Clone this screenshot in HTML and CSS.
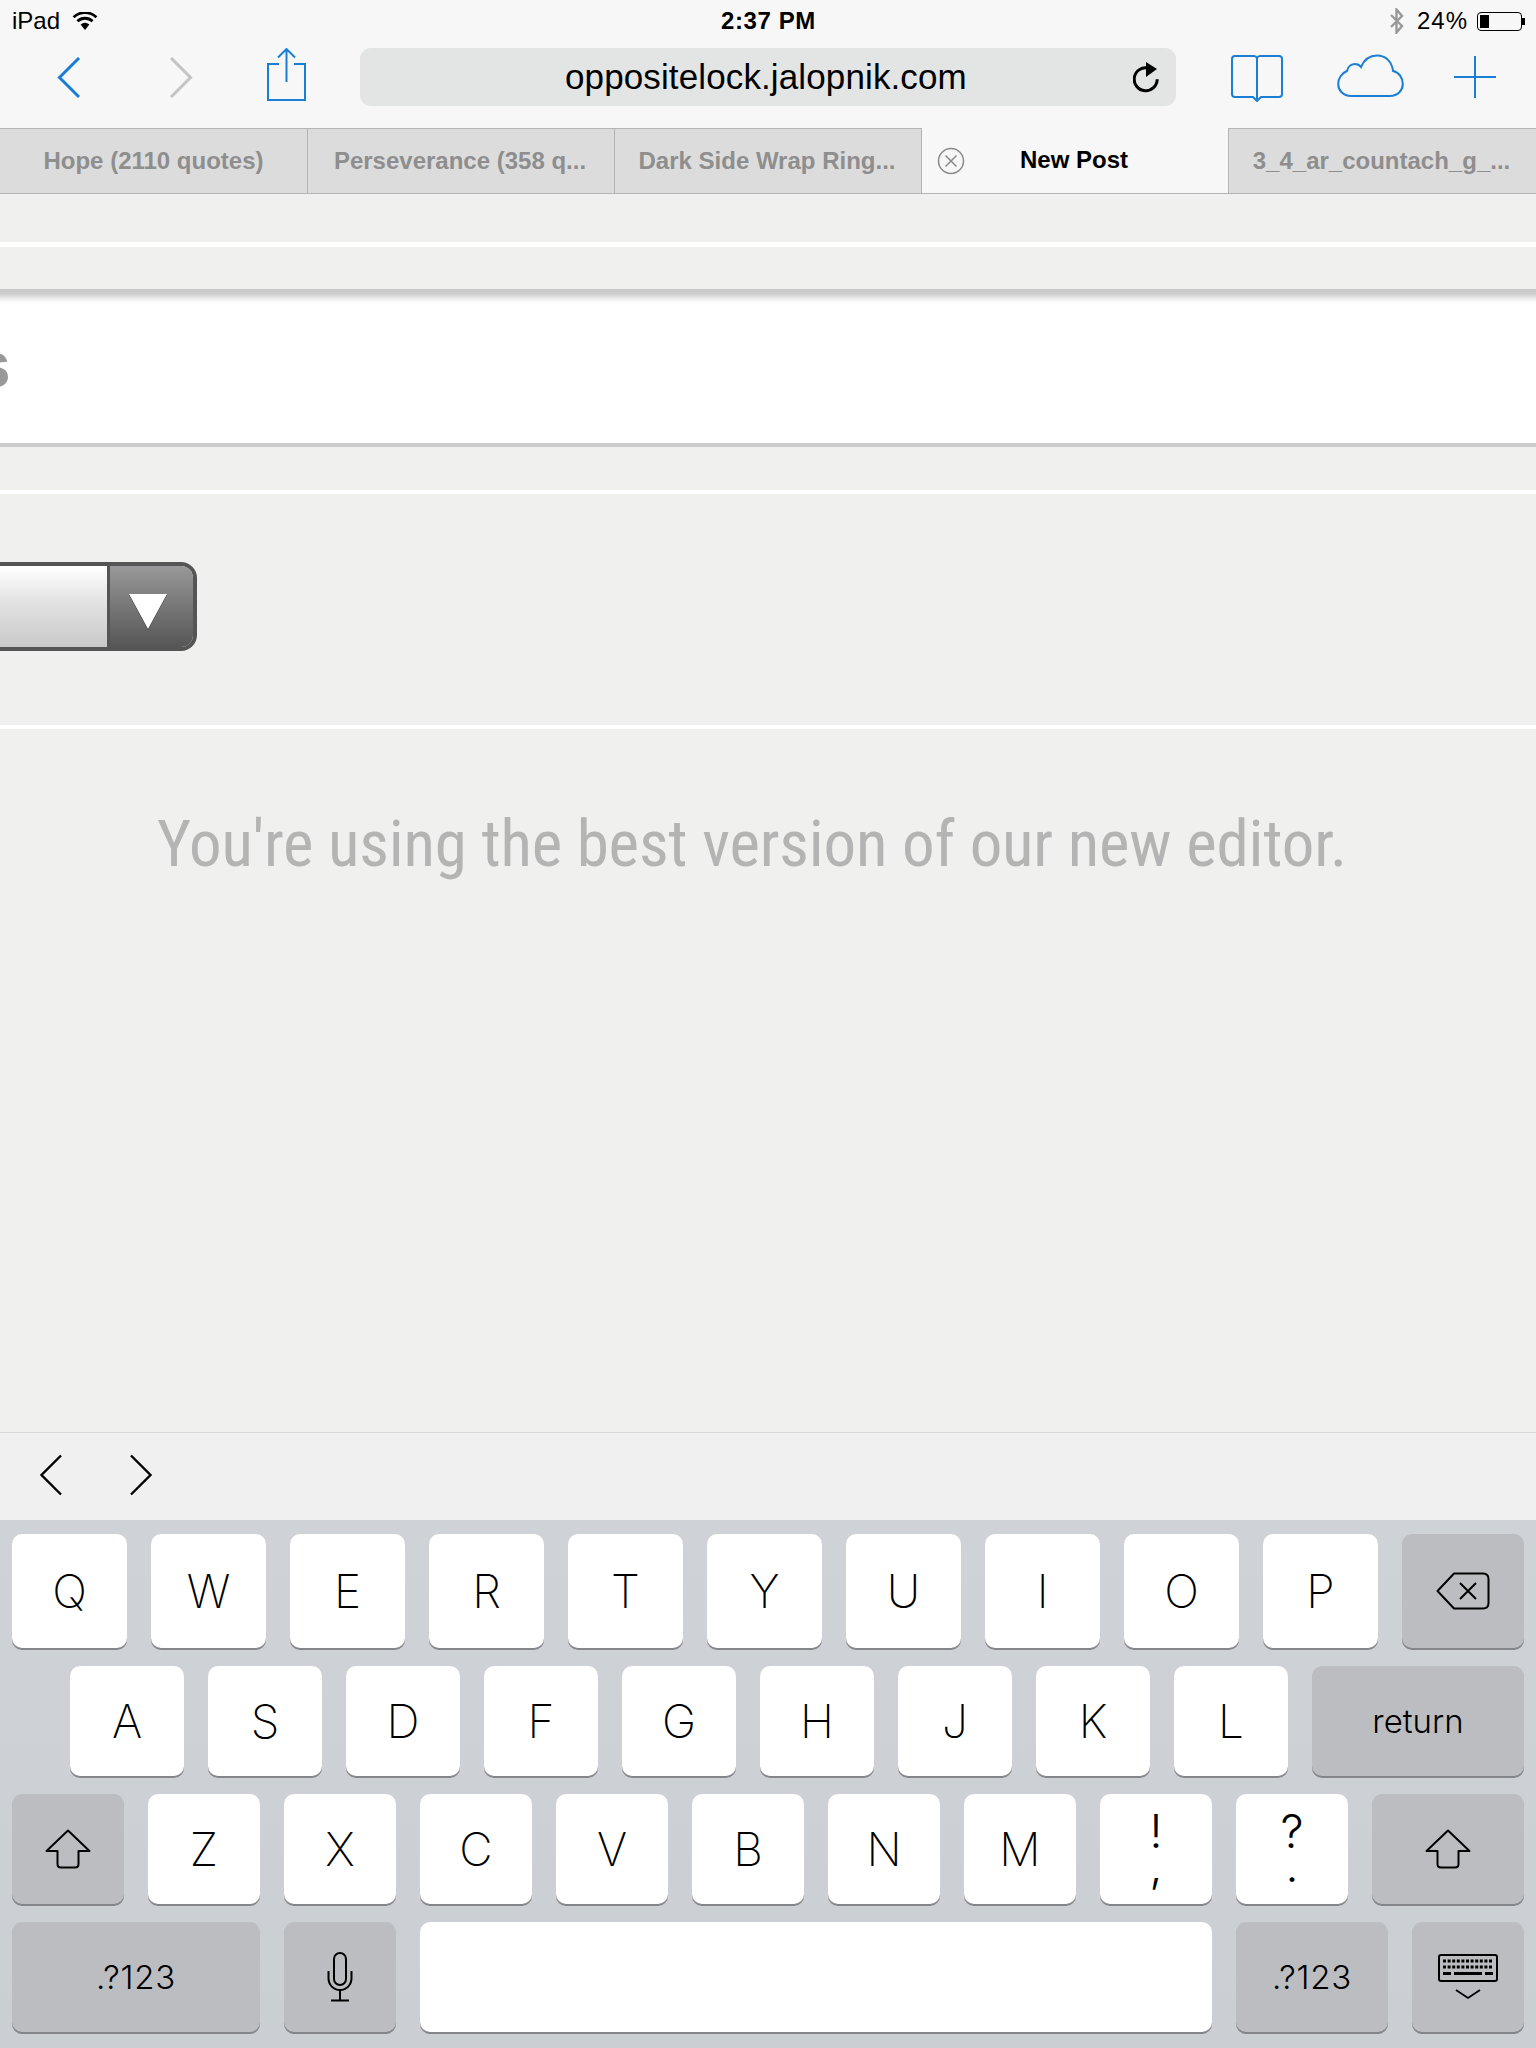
FILE: index.html
```html
<!DOCTYPE html>
<html lang="en">

<head>
    <meta charset="UTF-8">
    <title>New Post</title>
    <link rel="stylesheet" href="styles.css">
</head>

<body>
    <div class="screen">
        <div class="statusbar">
            <div class="status-left">
                <span>iPad</span>
                <svg class="wifi" width="26" height="18" viewBox="0 0 26 18"><path d="M13 18 L8.6 12.6 A7 7 0 0 1 17.4 12.6 Z" fill="#000"/><path d="M5.4 9.2 A11.2 11.2 0 0 1 20.6 9.2" fill="none" stroke="#000" stroke-width="2.8"/><path d="M1.6 5.2 A16.6 16.6 0 0 1 24.4 5.2" fill="none" stroke="#000" stroke-width="2.8"/></svg>
            </div>
            <div class="status-time">2:37 PM</div>
            <div class="status-right">
                <svg width="16" height="26" viewBox="0 0 16 26"><path d="M2 7 L13 18 L7.5 24.5 V1.5 L13 8 L2 19" fill="none" stroke="#999" stroke-width="2.400"/></svg>
                <span class="battery-text">24%</span>
                <div class="battery"><div class="battery-fill"></div></div>
            </div>
        </div>

        <div class="navbar">
            <svg class="nav-back" width="24" height="41" viewBox="0 0 24 41"><path d="M22 1 L2.5 20.5 L22 40" fill="none" stroke="#1a7ed6" stroke-width="3"/></svg>
            <svg class="nav-forward" width="24" height="41" viewBox="0 0 24 41"><path d="M2 1 L21.5 20.5 L2 40" fill="none" stroke="#c4c4c4" stroke-width="3"/></svg>
            <svg class="nav-share" width="40" height="54" viewBox="0 0 40 54"><path d="M12 16 H1 V52 H38 V16 H27 M19.500 1 V34 M11 9.500 L19.500 1 L28 9.500" fill="none" stroke="#1a7ed6" stroke-width="2"/></svg>
            <div class="urlbar">
                <span class="url">oppositelock.jalopnik.com</span>
                <svg class="reload" width="28" height="31" viewBox="0 0 28 31"><path d="M15 6 A11.500 11.500 0 1 0 24.200 17.300" fill="none" stroke="#000" stroke-width="3"/><path d="M13 0 L24 7 L13 15 Z" fill="#000"/></svg>
            </div>
            <svg class="nav-book" width="52" height="47" viewBox="0 0 52 47"><path d="M26 3 V44 M26 3 Q25 1 23 1 H4 Q1 1 1 4 V39 Q1 42 4 42 H22 L26 46 L30 42 H48 Q51 42 51 39 V4 Q51 1 48 1 H29 Q27 1 26 3 Z" fill="none" stroke="#1a7ed6" stroke-width="2"/></svg>
            <svg class="nav-cloud" width="67" height="44" viewBox="0 0 67 44"><path d="M14 42 C6 42 1.200 36 1.200 30 C1.200 24 5 19 10 17 C11 12 15 10 18 10 C20.500 10 22.500 11 24 13 C27 6 33 1.500 40 1.500 C49 1.500 55 8 56 17 C62 18 65.800 24 65.800 30 C65.800 36 61 42 53 42 Z" fill="none" stroke="#1a7ed6" stroke-width="2"/></svg>
            <svg class="nav-plus" width="42" height="42" viewBox="0 0 42 42"><path d="M21 0 V42 M0 21 H42" fill="none" stroke="#1a7ed6" stroke-width="2"/></svg>
        </div>

        <div class="tabs">
            <div class="tab tab-first">Hope (2110 quotes)</div>
            <div class="tab">Perseverance (358 q...</div>
            <div class="tab">Dark Side Wrap Ring...</div>
            <div class="tab tab-active">
                <svg class="tab-close" width="28" height="28" viewBox="0 0 28 28"><circle cx="14" cy="14" r="12.500" fill="none" stroke="#8a8a8a" stroke-width="1.500"/><path d="M8.500 8.500 L19.500 19.500 M19.500 8.500 L8.500 19.500" stroke="#8a8a8a" stroke-width="1.500"/></svg>
                New Post
            </div>
            <div class="tab tab-last">3_4_ar_countach_g_...</div>
        </div>

        <div class="page">
            <div class="band band-one"></div>
            <div class="band band-two"></div>
            <div class="title-field"><span class="title-letter">s</span></div>
            <div class="band band-three"></div>
            <div class="select-row">
                <div class="select">
                    <div class="select-value"></div>
                    <div class="select-button"><div class="select-arrow"></div></div>
                </div>
            </div>
            <p class="message">You're using the best version of our new editor.</p>
        </div>

        <div class="accessory">
            <svg width="24" height="42" viewBox="0 0 24 42"><path d="M22 1.500 L2.500 21 L22 40.500" fill="none" stroke="#000" stroke-width="2.400"/></svg>
            <svg width="24" height="42" viewBox="0 0 24 42"><path d="M2 1.500 L21.500 21 L2 40.500" fill="none" stroke="#000" stroke-width="2.400"/></svg>
        </div>

        <div class="keyboard">
            <div class="row row-one">
                <div class="key">Q</div><div class="key">W</div><div class="key">E</div><div class="key">R</div><div class="key">T</div>
                <div class="key">Y</div><div class="key">U</div><div class="key">I</div><div class="key">O</div><div class="key">P</div>
                <div class="key key-gray key-back">
                    <svg width="54" height="38" viewBox="0 0 54 38"><path d="M18 1.500 H47 Q52.500 1.500 52.500 7 V31 Q52.500 36.500 47 36.500 H18 L1.500 19 Z" fill="none" stroke="#000" stroke-width="2" stroke-linejoin="round"/><path d="M24 11 L40 27 M40 11 L24 27" stroke="#000" stroke-width="2"/></svg>
                </div>
            </div>
            <div class="row row-two">
                <div class="key">A</div><div class="key">S</div><div class="key">D</div><div class="key">F</div><div class="key">G</div>
                <div class="key">H</div><div class="key">J</div><div class="key">K</div><div class="key">L</div>
                <div class="key key-gray key-return">return</div>
            </div>
            <div class="row row-three">
                <div class="key key-gray">
                    <svg width="46" height="40" viewBox="0 0 46 40"><path d="M23 1.500 L44.500 22 H33.500 V35 Q33.500 38.500 30 38.500 H16 Q12.500 38.500 12.500 35 V22 H1.500 Z" fill="none" stroke="#000" stroke-width="2" stroke-linejoin="round"/></svg>
                </div>
                <div class="key">Z</div><div class="key">X</div><div class="key">C</div><div class="key">V</div>
                <div class="key">B</div><div class="key">N</div><div class="key">M</div>
                <div class="key key-double"><span>!</span><span>,</span></div>
                <div class="key key-double"><span>?</span><span>.</span></div>
                <div class="key key-gray key-shift-right">
                    <svg width="46" height="40" viewBox="0 0 46 40"><path d="M23 1.500 L44.500 22 H33.500 V35 Q33.500 38.500 30 38.500 H16 Q12.500 38.500 12.500 35 V22 H1.500 Z" fill="none" stroke="#000" stroke-width="2" stroke-linejoin="round"/></svg>
                </div>
            </div>
            <div class="row row-four">
                <div class="key key-gray key-num key-num-left">.?123</div>
                <div class="key key-gray">
                    <svg width="26" height="50" viewBox="0 0 26 50"><rect x="7" y="1" width="12" height="32" rx="6" fill="none" stroke="#000" stroke-width="2"/><path d="M1.500 19 V26 C1.500 33 6.500 38 13 38 C19.500 38 24.500 33 24.500 26 V19 M13 38 V48 M4 48.500 H22" fill="none" stroke="#000" stroke-width="2"/></svg>
                </div>
                <div class="key key-space"></div>
                <div class="key key-gray key-num key-num-right">.?123</div>
                <div class="key key-gray key-hide">
                    <svg width="60" height="46" viewBox="0 0 60 46"><rect x="1" y="1" width="58" height="26" rx="2" fill="none" stroke="#000" stroke-width="2"/><path d="M5 7 H55 M5 13 H55" stroke="#000" stroke-width="3" stroke-dasharray="3 1.600"/><path d="M5 19.500 H13 M16 19.500 H44 M47 19.500 H55" stroke="#000" stroke-width="3"/><path d="M18 36 L30 44 L42 36" fill="none" stroke="#000" stroke-width="1.800"/></svg>
                </div>
            </div>
        </div>
    </div>
</body>

</html>
```

FILE: styles.css
```css
* {
    box-sizing: border-box;
}

body {
    margin: 0;
    background: #f0f0ee;
    font-family: 'Liberation Sans', Arial, sans-serif;
}

.screen {
    width: 1536px;
    height: 2048px;
    display: flex;
    flex-direction: column;
    overflow: hidden;
}

/* status bar */
.statusbar {
    height: 48px;
    padding: 7px 11px 0 12px;
    display: grid;
    grid-template-columns: 1fr auto 1fr;
    align-items: start;
    background: #f7f7f7;
    font-size: 24px;
    line-height: 28px;
    color: #000;
}

.status-left {
    height: 28px;
    display: flex;
    align-items: center;
    gap: 12px;
}

.status-time {
    font-weight: bold;
    letter-spacing: 0.6px;
}

.status-right {
    height: 28px;
    display: flex;
    align-items: center;
    justify-content: flex-end;
    gap: 12px;
}

.battery-text {
    letter-spacing: 1px;
}

.battery {
    width: 45px;
    height: 19px;
    margin: 0 3px 0 -3px;
    padding: 2px;
    border: 1px solid #000;
    border-radius: 4px;
    position: relative;
}

.battery::after {
    content: "";
    position: absolute;
    right: -4px;
    top: 5px;
    width: 3px;
    height: 7px;
    background: #000;
}

.battery-fill {
    width: 9px;
    height: 100%;
    background: #000;
}

/* nav bar */
.navbar {
    height: 80px;
    padding-bottom: 22px;
    display: flex;
    align-items: center;
    background: #f7f7f7;
}

.navbar svg {
    flex: none;
}

.nav-back {
    margin-left: 57px;
}

.nav-forward {
    margin-left: 88px;
}

.nav-share {
    margin-left: 74px;
    margin-top: -4px;
}

.urlbar {
    width: 816px;
    height: 58px;
    margin-left: 53px;
    padding-left: 205px;
    display: flex;
    align-items: center;
    background: #e3e4e4;
    border-radius: 11px;
    position: relative;
}

.url {
    font-size: 35px;
    letter-spacing: 0.12px;
    color: #000;
}

.reload {
    position: absolute;
    right: 15px;
    top: 14px;
}

.nav-book {
    margin-left: 55px;
    margin-top: 2px;
}

.nav-cloud {
    margin-left: 54px;
    margin-top: -2px;
}

.nav-plus {
    margin-left: 50px;
}

/* tabs */
.tabs {
    height: 66px;
    display: grid;
    grid-template-columns: 308px 307px 307px 307px 307px;
    font-size: 24px;
    font-weight: bold;
    line-height: 64px;
    background: #f7f7f7;
}

.tab {
    padding-right: 2px;
    text-align: center;
    color: #8e8e8e;
    background: #dcdcdc;
    border-top: 1px solid #b4b4b4;
    border-bottom: 1px solid #b4b4b4;
    border-right: 1px solid #b4b4b4;
    white-space: nowrap;
    overflow: hidden;
}

.tab-first {
    padding-right: 0;
}

.tab-active {
    color: #000;
    background: #f7f7f7;
    border-top: none;
    position: relative;
}

.tab-last {
    border-right: none;
}

.tab-close {
    position: absolute;
    left: 15px;
    top: 19px;
}

/* page */
.page {
    flex: 1;
    background: #f0f0ee;
}

.band {
    background: #f0f0ee;
}

.band-one {
    height: 53px;
    border-bottom: 5px solid #fff;
}

.band-two {
    height: 42px;
}

.title-field {
    height: 158px;
    padding-top: 39px;
    background: linear-gradient(#c8c8c8, #cfcfcf 5px, #eee 10px, #fff 14px);
    border-bottom: 4px solid #ccc;
    overflow: hidden;
}

.title-letter {
    display: block;
    margin-left: -25px;
    font-size: 64px;
    line-height: 74px;
    font-weight: bold;
    color: #999;
}

.band-three {
    height: 47px;
    border-bottom: 4px solid #fff;
}

.select-row {
    height: 235px;
    padding-top: 68px;
    border-bottom: 4px solid #fff;
}

.select {
    width: 197px;
    height: 89px;
    display: flex;
    border: 4px solid #555;
    border-left: none;
    border-radius: 0 16px 16px 0;
    overflow: hidden;
}

.select-value {
    width: 110px;
    border-right: 3px solid #555;
    background: linear-gradient(#fff, #e2e2e3 45%, #c9c9c9);
}

.select-button {
    flex: 1;
    padding: 28px 0 0 19px;
    background: linear-gradient(#989898, #565656);
}

.select-arrow {
    width: 0;
    height: 0;
    border-left: 19px solid transparent;
    border-right: 19px solid transparent;
    border-top: 35px solid #fff;
    filter: drop-shadow(0 1px 0 #333);
}

.message {
    margin: 0;
    padding: 79px 32px 0 0;
    text-align: center;
    font-family: 'Roboto Condensed', Roboto, sans-serif;
    font-stretch: condensed;
    font-weight: 400;
    font-size: 65px;
    line-height: 72px;
    letter-spacing: -0.17px;
    color: #b4b4b4;
}

/* accessory bar over the keyboard */
.accessory {
    height: 88px;
    padding: 21px 0 0 39px;
    display: flex;
    gap: 66px;
    background: #f0f0f0;
    border-top: 1px solid #d9d9d9;
}

.accessory svg {
    flex: none;
}

/* keyboard */
.keyboard {
    height: 528px;
    padding: 14px 12px 0;
    display: flex;
    flex-direction: column;
    gap: 18px;
    background: linear-gradient(#cfd2d6, #cbced3);
}

.row {
    height: 110px;
    display: flex;
    gap: 24px;
}

.row-one {
    height: 114px;
}

.row-two {
    padding-left: 58px;
}

.key {
    width: 112px;
    flex: none;
    display: flex;
    align-items: center;
    justify-content: center;
    font-family: Inter, 'Liberation Sans', sans-serif;
    font-weight: 250;
    font-size: 46px;
    color: #000;
    background: #fff;
    border-radius: 10px;
    box-shadow: 0 2px 0 #85868a;
}

.row-one .key {
    width: 115px;
}

.row-two .key {
    width: 114px;
}

.key-gray {
    background: #bcbdc1;
    font-size: 33px;
    font-weight: 300;
}

.row-one .key-back {
    width: 122px;
}

.row-two .key-return {
    width: 212px;
}

.key-shift-right {
    width: 152px;
}

.key-num {
    letter-spacing: 0.8px;
}

.key-num-left {
    width: 248px;
}

.key-space {
    width: 792px;
}

.key-num-right {
    width: 152px;
}

.key-double {
    flex-direction: column;
    font-weight: 300;
    line-height: 34px;
    padding-bottom: 2px;
}
```
